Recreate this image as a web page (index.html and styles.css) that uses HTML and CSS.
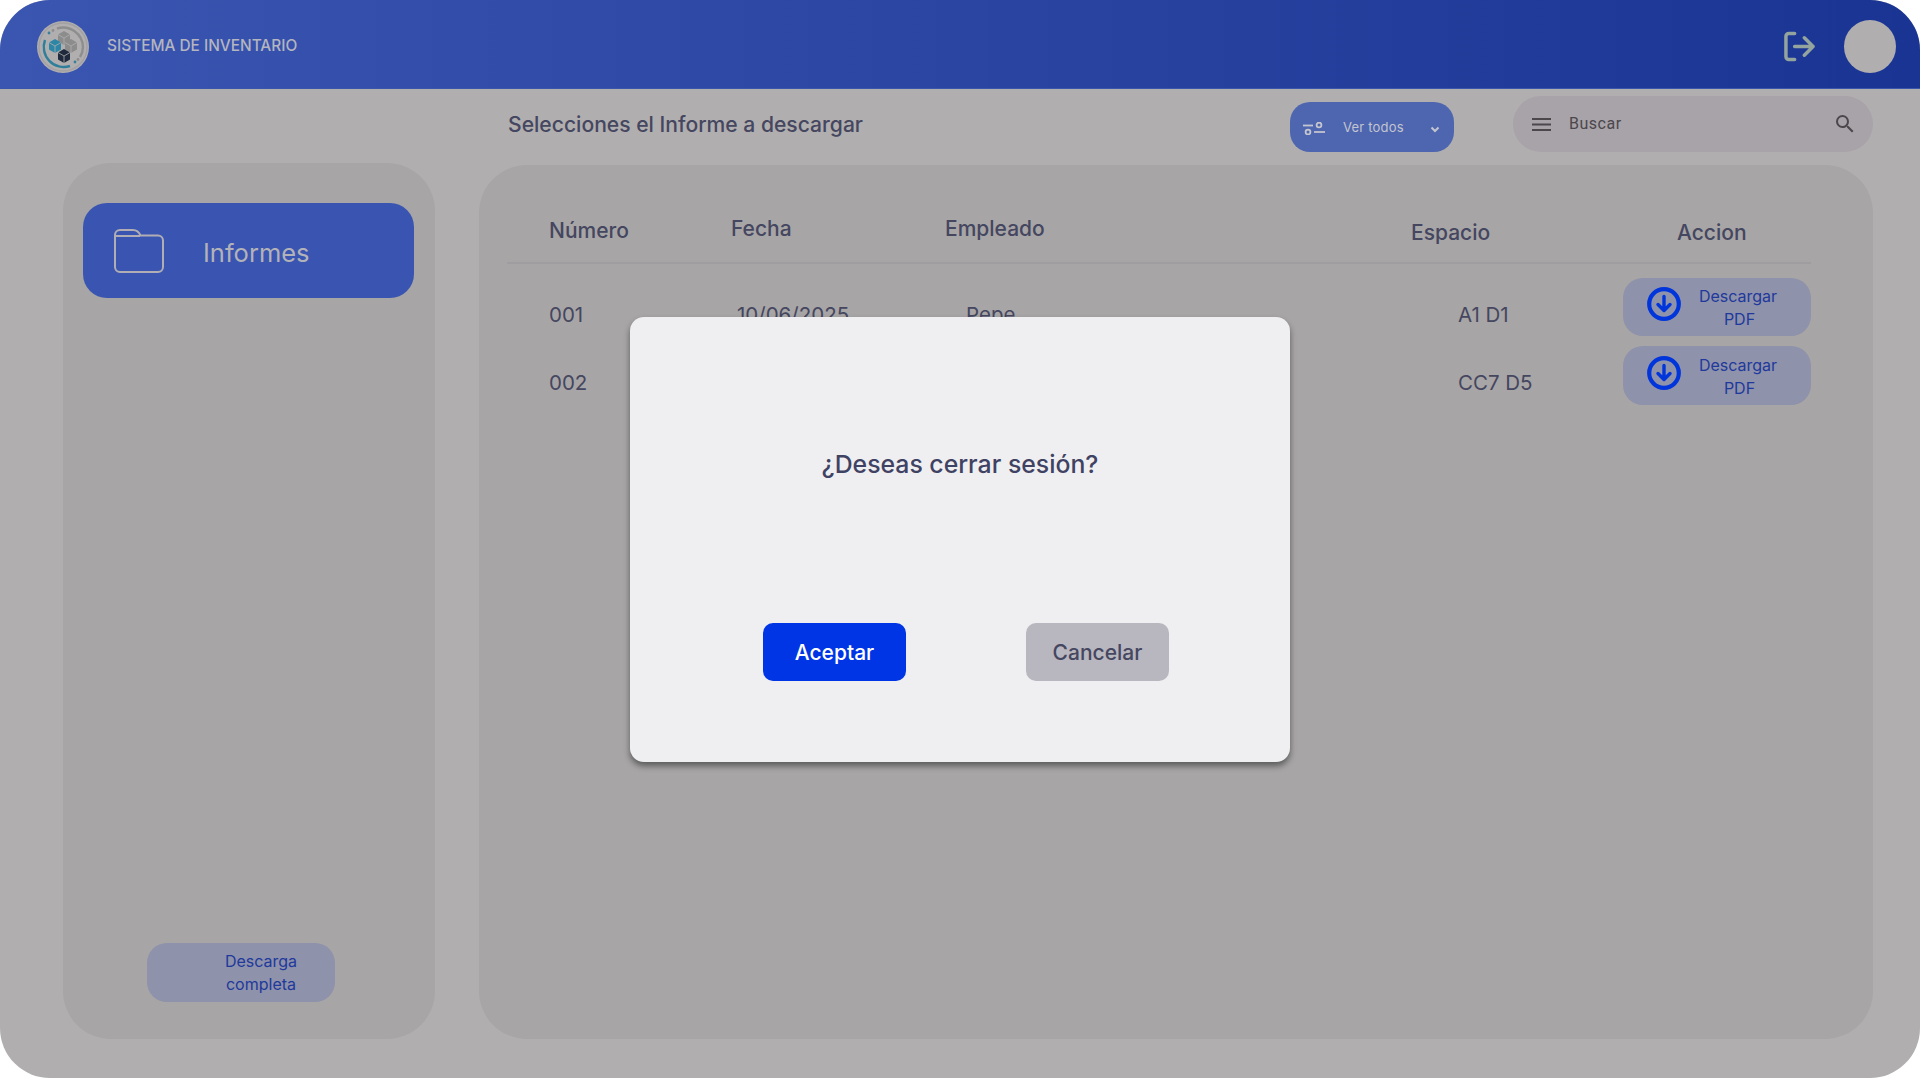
FILE: index.html
```html
<!DOCTYPE html>
<html lang="es">
<head>
<meta charset="utf-8">
<title>Sistema de Inventario</title>
<link rel="stylesheet" href="styles.css">
</head>
<body>
<div class="app">
  <header class="header">
    <svg class="logo" viewBox="0 0 52 52">
      <defs>
        <g id="cube">
          <path d="M0-7 6-3.5V3.5L0 7-6 3.5V-3.5Z"/>
          <path class="cube-line" d="M-6-3.5 0 0 6-3.5M0 0V7"/>
        </g>
      </defs>
      <circle cx="26" cy="26" r="26" fill="#b0aeaf"/>
      <circle cx="26" cy="26" r="24" fill="none" stroke="#a3a1a2" stroke-width="1.4"/>
      <path d="M20 7.5A20 20 0 0 1 46 26a20 20 0 0 1-3 10" fill="none" stroke="#8f8e8e" stroke-width="2.4"/>
      <path d="M8 19A20 20 0 0 0 33 45" fill="none" stroke="#2f7f9b" stroke-width="2.4"/>
      <circle cx="12" cy="12" r="1.4" fill="#3b7f9c"/>
      <circle cx="16" cy="9.5" r="1.4" fill="#8f8e8e"/>
      <circle cx="38" cy="41" r="1.4" fill="#3b7f9c"/>
      <circle cx="41" cy="38.5" r="1.4" fill="#8f8e8e"/>
      <use href="#cube" x="27" y="17" fill="#8d8c8d"/>
      <use href="#cube" x="34" y="25" fill="#8d8c8d"/>
      <use href="#cube" x="18" y="25" fill="#2d86a6"/>
      <use href="#cube" x="27" y="35" fill="#1f2a3c"/>
    </svg>
    <span class="brand">SISTEMA DE INVENTARIO</span>
    <svg class="logout" viewBox="0 0 32 31" fill="none" stroke="#93a39e" stroke-width="3.6" stroke-linecap="round" stroke-linejoin="round">
      <path d="M11 2H5a3 3 0 0 0-3 3v21a3 3 0 0 0 3 3h6"/>
      <path d="M11 15.5H29.5M21 6.5l9 9-9 9"/>
    </svg>
    <div class="avatar"></div>
  </header>

  <div class="body">
    <aside class="sidebar">
      <div class="nav-item">
        <svg class="folder" viewBox="0 0 50 45" fill="none" stroke="#b0aeb4" stroke-width="2">
          <path d="M1 7a5 5 0 0 1 5-5h13c4 0 6 2 7.500 5.500H44a5 5 0 0 1 5 5V39a5 5 0 0 1-5 5H6a5 5 0 0 1-5-5Z"/>
          <path d="M1 8H26"/>
        </svg>
        <span>Informes</span>
      </div>
      <div class="btn-soft btn-full">
        <div class="btn-text"><span>Descarga</span><span>completa</span></div>
      </div>
    </aside>

    <div class="content">
      <div class="topbar">
        <h1 class="page-title">Selecciones el Informe a descargar</h1>
        <div class="filter">
          <svg class="filter-icon" viewBox="0 0 22 13" fill="none" stroke="#c4c5cf" stroke-width="1.800">
            <path d="M0 3.500H10"/>
            <circle cx="16" cy="3" r="2.400"/>
            <circle cx="5" cy="10" r="2.400"/>
            <path d="M11 10H22"/>
          </svg>
          <span class="filter-label">Ver todos</span>
          <svg class="chevron" viewBox="0 0 10 7" fill="none" stroke="#c4c5cf" stroke-width="2"><path d="M1.500 1.500 5 5 8.500 1.500"/></svg>
        </div>
        <div class="search">
          <svg class="menu-icon" viewBox="0 0 19 13" fill="#4b474b"><rect width="19" height="2"/><rect y="5.500" width="19" height="2"/><rect y="11" width="19" height="2"/></svg>
          <span class="search-label">Buscar</span>
          <svg class="search-icon" viewBox="0 0 24 24" fill="#4b474b"><path d="M15.500 14h-.79l-.28-.27A6.470 6.470 0 0 0 16 9.500 6.500 6.500 0 1 0 9.500 16c1.610 0 3.090-.59 4.230-1.570l.27.28v.79l5 4.990L20.490 19l-4.990-5zm-6 0C7.010 14 5 11.990 5 9.500S7.010 5 9.500 5 14 7.010 14 9.500 11.990 14 9.500 14z"/></svg>
        </div>
      </div>

      <main class="panel">
        <div class="row-head">
          <div class="head-num">Número</div>
          <div class="head-date">Fecha</div>
          <div class="head-emp">Empleado</div>
          <div class="head-space">Espacio</div>
          <div class="head-action">Accion</div>
        </div>
        <div class="rows">
          <div class="row">
            <div class="cell cell-num">001</div>
            <div class="cell cell-date">10/06/2025</div>
            <div class="cell cell-emp">Pepe</div>
            <div class="cell cell-space">A1 D1</div>
            <div class="cell-action">
              <div class="btn-soft btn-pdf">
                <svg class="dl-icon" viewBox="0 0 34 34" fill="none" stroke="#0035dc" stroke-linecap="round" stroke-linejoin="round"><circle cx="17" cy="17" r="14.800" stroke-width="4.200"/><path d="M17 9.500V23M11 17.500l6 6 6-6" stroke-width="3.400"/></svg>
                <div class="btn-text"><span>Descargar</span><span class="pdf">PDF</span></div>
              </div>
            </div>
          </div>
          <div class="row">
            <div class="cell cell-num">002</div>
            <div class="cell cell-date"></div>
            <div class="cell cell-emp"></div>
            <div class="cell cell-space">CC7 D5</div>
            <div class="cell-action">
              <div class="btn-soft btn-pdf">
                <svg class="dl-icon" viewBox="0 0 34 34" fill="none" stroke="#0035dc" stroke-linecap="round" stroke-linejoin="round"><circle cx="17" cy="17" r="14.800" stroke-width="4.200"/><path d="M17 9.500V23M11 17.500l6 6 6-6" stroke-width="3.400"/></svg>
                <div class="btn-text"><span>Descargar</span><span class="pdf">PDF</span></div>
              </div>
            </div>
          </div>
        </div>
      </main>
    </div>
  </div>

  <div class="modal" role="dialog">
    <p class="modal-text">¿Deseas cerrar sesión?</p>
    <div class="modal-actions">
      <button class="modal-btn accept">Aceptar</button>
      <button class="modal-btn cancel">Cancelar</button>
    </div>
  </div>
</div>
</body>
</html>
```
FILE: styles.css
```css
* { box-sizing: border-box; }
html, body { margin: 0; padding: 0; background: #fff; }
body { font-family: "Inter", "Liberation Sans", sans-serif; color: #45465f; }

.app {
  position: relative;
  width: 1920px;
  height: 1078px;
  display: flex;
  flex-direction: column;
  background: #b0aeaf;
  border-radius: 50px;
  overflow: hidden;
}

/* Header */
.header {
  height: 89px;
  flex: none;
  display: flex;
  align-items: center;
  padding: 0 24px 0 37px;
  background: linear-gradient(90deg, #3a56b1 0%, #1a3493 100%);
  border-bottom: 1px solid #3b55ad;
}
.logo { width: 52px; height: 52px; flex: none; margin-top: 6px; }
.cube-line { fill: none; stroke: #b0aeaf; stroke-width: .8; }
.brand {
  margin-left: 18px;
  margin-top: 2px;
  font-size: 15.400px;
  font-weight: 500;
  color: #b4b5bf;
}
.logout { width: 31px; height: 31px; margin-left: auto; margin-top: 4px; }
.avatar {
  width: 52px;
  height: 53px;
  margin-left: 29px;
  margin-top: 4px;
  border-radius: 50%;
  background: #b0aeaf;
}

/* Body */
.body {
  flex: 1;
  min-height: 0;
  display: flex;
  gap: 44px;
  padding: 0 47px 39px 63px;
}
.sidebar {
  width: 372px;
  flex: none;
  margin-top: 74px;
  display: flex;
  flex-direction: column;
  justify-content: space-between;
  padding: 40px 21px 37px 20px;
  background: #a7a5a6;
  border-radius: 48px;
}
.nav-item {
  height: 95px;
  display: flex;
  align-items: center;
  padding-left: 31px;
  gap: 39px;
  background: #3a55b1;
  border-radius: 24px;
  font-size: 25.500px;
  color: #b3b2b8;
}
.folder { width: 50px; height: 45px; flex: none; }
.nav-item span { margin-top: 3px; }

.btn-soft {
  background: #8e92aa;
  border-radius: 20px;
  color: #21399c;
  font-size: 16px;
  line-height: 23px;
  display: flex;
  align-items: center;
}
.btn-text { display: flex; flex-direction: column; align-items: center; }
.btn-full {
  width: 188px;
  height: 59px;
  align-self: flex-start;
  margin-left: 64px;
  padding-left: 64px;
}
.btn-full .btn-text { width: 100px; }

/* Content */
.content {
  flex: 1;
  min-width: 0;
  display: flex;
  flex-direction: column;
}
.topbar {
  height: 76px;
  flex: none;
  display: flex;
  align-items: flex-start;
  padding: 7px 0 0 29px;
}
.page-title {
  margin: 17px 0 0;
  font-size: 21.100px;
  line-height: 24px;
  font-weight: 500;
  color: #45465f;
}
.filter {
  width: 164px;
  height: 50px;
  margin-left: auto;
  margin-top: 6px;
  display: flex;
  align-items: center;
  padding-left: 13px;
  background: #4e66b0;
  border-radius: 20px;
  color: #c4c5cf;
}
.filter-icon { width: 22px; height: 13px; flex: none; margin-top: 2px; }
.filter-label {
  margin-left: 18px;
  font-size: 13px;
  letter-spacing: .2px;
}
.chevron { width: 10px; height: 7px; margin-left: 26px; margin-top: 4px; }
.search {
  width: 360px;
  height: 56px;
  margin-left: 59px;
  display: flex;
  align-items: center;
  padding: 0 16px 0 19px;
  background: #a8a2a9;
  border-radius: 28px;
  color: #4b474b;
}
.menu-icon { width: 19px; height: 13px; flex: none; }
.search-label {
  margin-left: 18px;
  margin-bottom: 2px;
  font-family: "Roboto", sans-serif;
  font-size: 16px;
  letter-spacing: .5px;
}
.search-icon { width: 24px; height: 24px; margin-left: auto; }

/* Table */
.panel {
  flex: 1;
  min-height: 0;
  padding: 0 62px 0 28px;
  background: #a7a5a6;
  border-radius: 48px;
}
.row-head {
  display: grid;
  grid-template-columns: 224px 214px 466px 266px 1fr;
  height: 99px;
  border-bottom: 2px solid #9f9d9f;
  font-size: 21px;
  line-height: 30px;
  font-weight: 500;
  color: #45465f;
}
.head-num { padding: 51px 0 0 42px; }
.head-date { padding: 49px 0 0 0; }
.head-emp { padding: 49px 0 0 0; }
.head-space { padding: 53px 0 0 0; }
.head-action { padding: 53px 0 0 0; }

.rows {
  display: flex;
  flex-direction: column;
  gap: 10px;
  padding-top: 14px;
}
.row {
  display: grid;
  grid-template-columns: 224px 214px 466px 164px 1fr;
  height: 58px;
  font-size: 20.500px;
  line-height: 30px;
  color: #45465f;
}
.row + .row { height: 59px; }
.cell { padding-top: 22px; }
.cell-num { padding-left: 42px; }
.cell-date { padding-left: 6px; }
.cell-emp { padding-left: 21px; }
.cell-space { padding-left: 47px; }
.cell-action { display: flex; justify-content: flex-end; }
.btn-pdf {
  width: 188px;
  padding-left: 24px;
  gap: 15px;
}
.dl-icon { width: 34px; height: 34px; flex: none; margin-top: -6px; }
.btn-pdf .btn-text { width: 84px; padding-top: 2px; }
.pdf { padding-left: 3px; }

/* Modal */
.modal {
  position: absolute;
  left: 630px;
  top: 317px;
  width: 660px;
  height: 445px;
  background: #efeff1;
  border-radius: 14px;
  box-shadow: 0 4px 6px rgba(0, 0, 0, .45);
  display: flex;
  flex-direction: column;
  align-items: center;
}
.modal-text {
  margin: 130px 0 0;
  font-size: 24.800px;
  line-height: 34px;
  font-weight: 500;
  color: #3f4263;
}
.modal-actions {
  margin-top: 142px;
  margin-left: 12px;
  display: flex;
  gap: 120px;
}
.modal-btn {
  width: 143px;
  height: 58px;
  border: 0;
  border-radius: 10px;
  font-family: inherit;
  font-size: 21px;
  font-weight: 500;
}
.accept { background: #0035e6; color: #fff; }
.cancel { background: #b8b6bf; color: #45465f; }
```
